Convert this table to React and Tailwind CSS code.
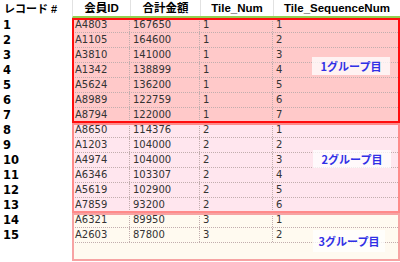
const rows = [
  ['A4803', '167650', '1', '1'],
  ['A1105', '164600', '1', '2'],
  ['A3810', '141000', '1', '3'],
  ['A1342', '138899', '1', '4'],
  ['A5624', '136200', '1', '5'],
  ['A8989', '122759', '1', '6'],
  ['A8794', '122000', '1', '7'],
  ['A8650', '114376', '2', '1'],
  ['A1203', '104000', '2', '2'],
  ['A4974', '104000', '2', '3'],
  ['A6346', '103307', '2', '4'],
  ['A5619', '102900', '2', '5'],
  ['A7859', '93200', '2', '6'],
  ['A6321', '89950', '3', '1'],
  ['A2603', '87800', '3', '2']
]

const groups = [
  {
    label: '1グループ目',
    rows: rows.slice(0, 7),
    box: 'bg-[#ffc9c9] outline-[#ff0d0d] h-[105px]',
    tag: 'left-[240px] top-[39px] w-[78px] h-[18px]'
  },
  {
    label: '2グループ目',
    rows: rows.slice(7, 13),
    box: 'bg-[#ffe6ee] outline-[#ff8a8a] h-[90px]',
    tag: 'left-[241px] top-[27px] w-[78px] h-[18px]'
  },
  {
    label: '3グループ目',
    rows: rows.slice(13),
    box: 'bg-[#fffaf0] outline-[#f7a3a3] h-[48px]',
    tag: 'left-[241px] top-[17px] w-[72px] h-[22px]'
  }
]

const cols = 'grid grid-cols-[58px_70px_73px_1fr]'

const Row = ({ cells }) => (
  <div className={`${cols} h-[15px] border-b border-dotted border-[#c2aeae]`}>
    {cells.map((c, i) => (
      <div
        key={i}
        className={`pl-[3px] leading-[14px] ${i < 3 ? 'border-r border-dotted border-[#c2aeae]' : ''}`}
      >
        {c}
      </div>
    ))}
  </div>
)

export default function App() {
  return (
    <div className="w-[400px] h-[262px] bg-white overflow-hidden text-[#333]">
      <div className="flex h-[18px] font-['Liberation_Sans','Noto_Sans_CJK_JP',sans-serif] font-bold text-black">
        <div className="w-[72px] pl-[4px] text-[11px] leading-[18px]">レコード #</div>
        <div className={`${cols} flex-1 border-b-2 border-[#92d050] border-l border-l-[#e2e2e2] text-[11.5px] leading-[16px]`}>
          <div className="text-center border-r border-[#e2e2e2]">会員ID</div>
          <div className="text-center border-r border-[#e2e2e2]">合計金額</div>
          <div className="text-center border-r border-[#e2e2e2]">Tile_Num</div>
          <div className="text-center">Tile_SequenceNum</div>
        </div>
      </div>

      <div className="flex font-['DejaVu_Sans','Noto_Sans_CJK_JP',sans-serif]">
        <div className="w-[72px] flex flex-col font-bold text-black text-[11.5px]">
          {rows.map((r, i) => (
            <div key={i} className="h-[15px] leading-[15px] pl-[3px]">{i + 1}</div>
          ))}
        </div>

        <div className="flex-1 flex flex-col text-[10px]">
          {groups.map(g => (
            <div key={g.label} className={`relative outline-2 -outline-offset-2 ${g.box}`}>
              {g.rows.map(r => <Row key={r[0]} cells={r} />)}
              <div
                className={`absolute ${g.tag} bg-white/75 flex items-center justify-center font-['Noto_Sans_CJK_JP',sans-serif] font-bold text-[11px] text-[#3030e6]`}
              >
                {g.label}
              </div>
            </div>
          ))}
        </div>
      </div>
    </div>
  )
}
